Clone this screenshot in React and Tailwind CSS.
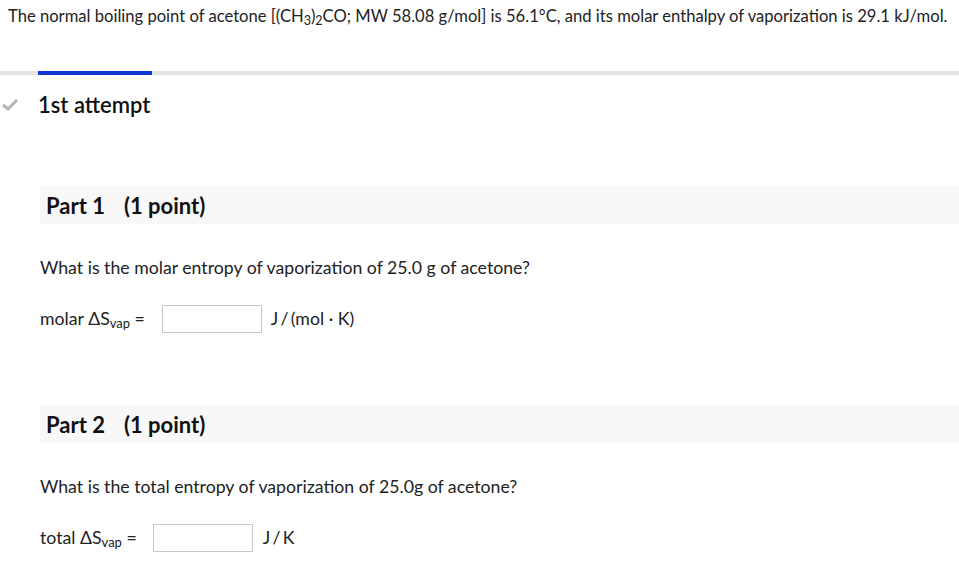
export default function App() {
  const font = { fontFamily: 'Lato, "Liberation Sans", sans-serif' };
  return (
    <div className="h-[574px] w-[959px] overflow-hidden bg-white text-[#222]" style={font}>
      <p className="whitespace-nowrap pl-[8px] pt-[4px] text-[16.6px] leading-[24px]">
        The normal boiling point of acetone [(CH<sub className="text-[12.5px]">3</sub>)<sub className="text-[12.5px]">2</sub>CO; MW 58.08 g/mol] is 56.1°C, and its molar enthalpy of vaporization is 29.1 kJ/mol.
      </p>

      <div className="mt-[43px] flex h-[4px] bg-[#e5e5e5]">
        <div className="ml-[38px] w-[114px] bg-[#1238d4]" />
      </div>

      <div className="mt-[17px] flex items-center">
        <svg width="18" height="14" viewBox="0 0 18 14" className="ml-[1px]">
          <path d="M2 7 L7 11 L16 2" fill="none" stroke="#b5b5b5" strokeWidth="3" />
        </svg>
        <h2 className="ml-[19px] text-[22px] font-semibold leading-[26px] text-[#111]">1st attempt</h2>
      </div>

      <div className="ml-[40px] mt-[68px]">
        <div className="flex h-[38px] items-center bg-[#f8f8f8] pl-[6px] text-[22px] font-bold text-[#111]">
          Part 1<span className="ml-[19px]">(1 point)</span>
        </div>
        <p className="mt-[32px] text-[17.7px] leading-[24px]">
          What is the molar entropy of vaporization of 25.0 g of acetone?
        </p>
        <div className="mt-[25px] flex items-center text-[17.7px]">
          <span>
            molar ΔS<sub className="text-[13px]">vap</sub> =
          </span>
          <div className="ml-[17px] h-[28px] w-[100px] border border-[#c8c8c8] bg-white" />
          <span className="ml-[9px]">J{'\u2009'}/{'\u2009'}(mol · K)</span>
        </div>

        <div className="mt-[72px] flex h-[38px] items-center bg-[#f8f8f8] pl-[6px] text-[22px] font-bold text-[#111]">
          Part 2<span className="ml-[19px]">(1 point)</span>
        </div>
        <p className="mt-[32px] text-[17.7px] leading-[24px]">
          What is the total entropy of vaporization of 25.0g of acetone?
        </p>
        <div className="mt-[25px] flex items-center text-[17.7px]">
          <span>
            total ΔS<sub className="text-[13px]">vap</sub> =
          </span>
          <div className="ml-[16px] h-[28px] w-[100px] border border-[#c8c8c8] bg-white" />
          <span className="ml-[10px]">J{'\u2009'}/{'\u2009'}K</span>
        </div>
      </div>
    </div>
  );
}
